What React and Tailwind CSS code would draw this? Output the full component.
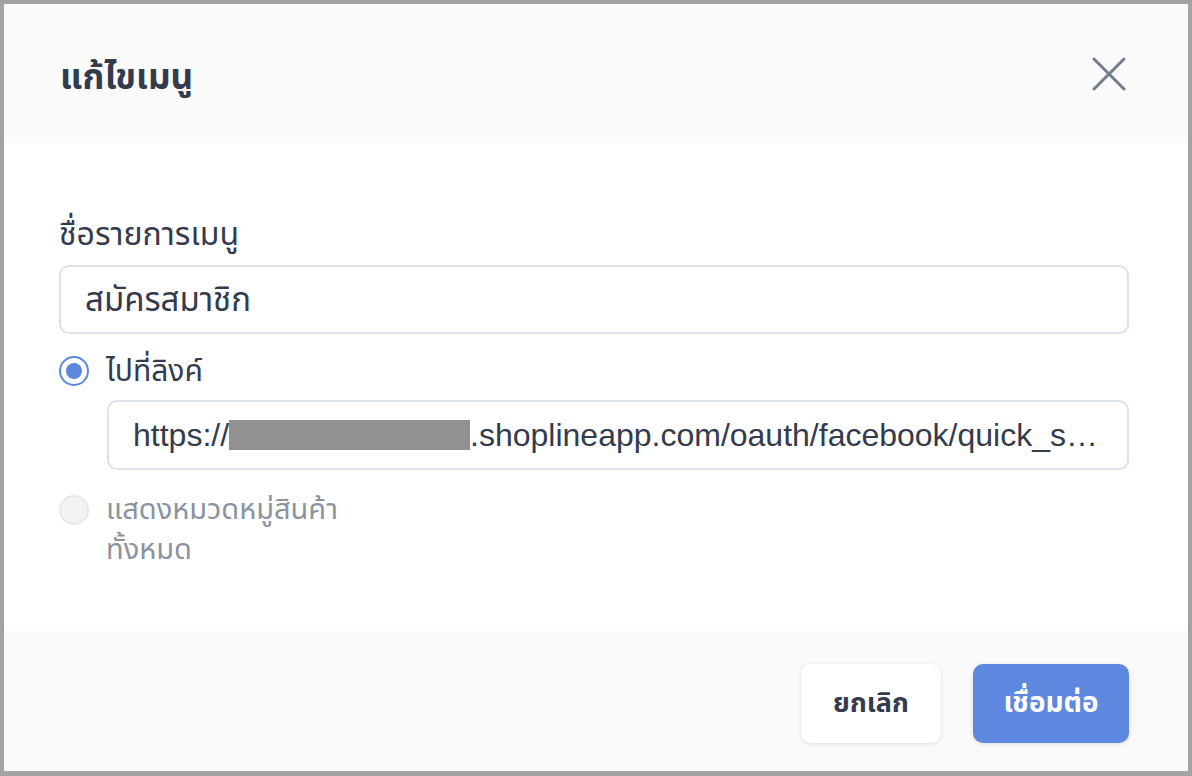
import React from "react";
import { useState } from "react";

const font = { fontFamily: '"Liberation Sans", "Noto Sans", "Noto Sans Thai", sans-serif' };

const App = () => {
    const [choice, setChoice] = useState("link");

    return (
        <div className="w-[1192px] h-[776px] bg-[#a3a3a3] p-[4px] overflow-hidden" style={font}>
            <div className="w-[1184px] h-[767px] bg-white flex flex-col">
                <div className="h-[139px] bg-[#fafafa] flex items-center justify-between pl-[56px] pr-[62px]">
                    <h1 className="text-[35px] font-bold text-[#333b4d] leading-[44px] mt-[6px]">แก้ไขเมนู</h1>
                    <button className="w-[34px] h-[34px] flex items-center justify-center text-[#737c8c]">
                        <svg width="34" height="34" viewBox="0 0 34 34" fill="none" stroke="currentColor" strokeWidth="3" strokeLinecap="round">
                            <path d="M2 2 L32 32" />
                            <path d="M32 2 L2 32" />
                        </svg>
                    </button>
                </div>

                <div className="flex-1 bg-white pl-[55px] pr-[59px] pt-[74px]">
                    <label className="block text-[32px] text-[#333b4d] leading-[34px]">ชื่อรายการเมนู</label>
                    <div className="mt-[14px] h-[69px] border-2 border-[#dbe2ea] rounded-[10px] flex items-center px-[24px] text-[33px] text-[#333b4d]">
                        สมัครสมาชิก
                    </div>

                    <div
                        className="mt-[22px] flex items-center gap-[17px] cursor-pointer"
                        onClick={() => setChoice("link")}
                    >
                        <span
                            className={`w-[30px] h-[30px] rounded-full flex items-center justify-center border-2 ${
                                choice === "link" ? "border-[#5b87dd] bg-white" : "border-[#e4e7eb] bg-[#f3f3f4]"
                            }`}
                        >
                            {choice === "link" && <span className="w-[16px] h-[16px] rounded-full bg-[#5b87dd]" />}
                        </span>
                        <span className="text-[30px] text-[#333b4d] leading-[30px]">ไปที่ลิงค์</span>
                    </div>

                    <div className="ml-[48px] mt-[14px] h-[70px] border-2 border-[#dbe2ea] rounded-[10px] flex items-center px-[24px] text-[32px] text-[#333b4d] whitespace-nowrap overflow-hidden">
                        <span>https://</span>
                        <span className="inline-block shrink-0 w-[241px] h-[30px] bg-[#919191]" />
                        <span className="truncate">.shoplineapp.com/oauth/facebook/quick_s…</span>
                    </div>

                    <div className="mt-[24px] flex items-start gap-[17px]">
                        <span className="mt-[1px] w-[30px] h-[30px] rounded-full border-2 border-[#e6e8ec] bg-[#f3f3f4] shrink-0" />
                        <span className="w-[260px] text-[29px] text-[#8b93a1] leading-[40px] -mt-[5px]">
                            แสดงหมวดหมู่สินค้าทั้งหมด
                        </span>
                    </div>
                </div>

                <div className="h-[140px] bg-[#fafafa] flex items-center justify-end gap-[32px] pr-[59px] pt-[4px]">
                    <button className="w-[140px] h-[79px] bg-white rounded-[10px] shadow-[0_1px_4px_rgba(0,0,0,0.12)] text-[27px] font-bold text-[#333b4d]">
                        ยกเลิก
                    </button>
                    <button className="w-[156px] h-[79px] bg-[#5e88df] rounded-[10px] shadow-[0_1px_4px_rgba(0,0,0,0.12)] text-[28px] font-bold text-white">
                        เชื่อมต่อ
                    </button>
                </div>
            </div>
        </div>
    );
};

export default App;
